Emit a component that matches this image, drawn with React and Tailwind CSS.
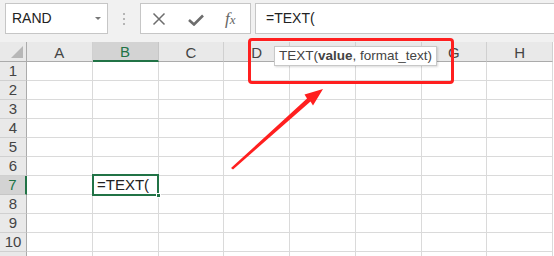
import React from "react";

const cols = ["A", "B", "C", "D", "E", "F", "G", "H"];
const rows = [1, 2, 3, 4, 5, 6, 7, 8, 9, 10, 11];

export default function App() {
  return (
    <div className="relative w-[554px] h-[256px] overflow-hidden bg-white" style={{ fontFamily: '"Liberation Sans", Arial, sans-serif' }}>
      {/* toolbar */}
      <div className="flex items-start h-[42px] bg-[#f1f1f1] pt-[3px]">
        <div className="ml-[5px] w-[103px] h-[31px] bg-white border border-[#c6c6c6] flex items-center pl-[6px] pr-[6px] text-[14px] text-[#222]">
          <span className="flex-1">RAND</span>
          <span className="w-0 h-0 border-l-[3px] border-r-[3px] border-t-[3px] border-l-transparent border-r-transparent border-t-[#777]" />
        </div>
        <div className="w-[32px] h-[31px] flex flex-col items-center justify-center gap-[3px]">
          <span className="w-[2px] h-[2px] bg-[#b5b5b5]" />
          <span className="w-[2px] h-[2px] bg-[#b5b5b5]" />
          <span className="w-[2px] h-[2px] bg-[#b5b5b5]" />
        </div>
        <div className="w-[111px] h-[31px] bg-white border border-[#c6c6c6] flex items-center">
          <svg className="ml-[11px]" width="14" height="14" viewBox="0 0 14 14">
            <path d="M1.5 1.5 L12.5 12.5 M12.5 1.5 L1.5 12.5" stroke="#6d6d6d" strokeWidth="1.5" fill="none" />
          </svg>
          <svg className="ml-[22px] mt-[2px]" width="16" height="12" viewBox="0 0 16 12">
            <path d="M1 6 L6 10.5 L15 1.5" stroke="#6d6d6d" strokeWidth="2.6" fill="none" />
          </svg>
          <span className="ml-[21px] text-[17px] italic text-[#666] leading-none" style={{ fontFamily: '"Liberation Serif", "Times New Roman", serif' }}>
            f<span className="text-[13px]">x</span>
          </span>
        </div>
        <div className="ml-[4px] flex-1 h-[31px] bg-white border border-[#c6c6c6] border-r-0 flex items-center pl-[10px] text-[14px] text-[#222]">
          =TEXT(
        </div>
      </div>

      {/* grid */}
      <div className="grid grid-cols-[27px_repeat(8,65.75px)] grid-rows-[20px_repeat(11,19px)]">
        {/* header row */}
        <div className="relative bg-[#e9e9e9] border-b border-r border-[#ababab]">
          <div className="absolute right-[3px] bottom-[3px] w-0 h-0" style={{ borderBottom: "12px solid #b7b7b7", borderLeft: "12px solid transparent" }} />
        </div>
        {cols.map((c) => (
          <div
            key={c}
            className={
              c === "B"
                ? "bg-[#d3d3d3] border-b-2 border-b-[#217346] border-r border-r-[#c6c6c6] flex items-center justify-center pt-[3px] text-[15px] text-[#217346]"
                : "bg-[#e9e9e9] border-b border-b-[#ababab] border-r border-r-[#d0d0d0] flex items-center justify-center pt-[3px] text-[15px] text-[#444]"
            }
          >
            {c}
          </div>
        ))}
        {rows.map((r) => (
          <React.Fragment key={r}>
            <div
              className={
                r === 7
                  ? "bg-[#d3d3d3] border-r-2 border-r-[#217346] border-b border-b-[#c6c6c6] flex items-center justify-center text-[15px] text-[#217346]"
                  : "bg-[#e9e9e9] border-r border-r-[#ababab] border-b border-b-[#d0d0d0] flex items-center justify-center text-[15px] text-[#444]"
              }
            >
              {r < 11 ? r : null}
            </div>
            {cols.map((c) => (
              <div key={c} className="border-r border-b border-[#dadada]" />
            ))}
          </React.Fragment>
        ))}
      </div>

      {/* selected cell B7 */}
      <div className="absolute left-[92px] top-[174px] w-[67px] h-[22px] border-2 border-[#217346] flex items-center pl-[3px] text-[15px] text-[#222]">
        =TEXT(
        <span className="absolute right-[-4px] bottom-[-4px] w-[5px] h-[5px] bg-[#217346] border border-white" />
      </div>

      {/* red rectangle */}
      <div className="absolute left-[248px] top-[38px] w-[206px] h-[46px] border-[3px] border-[#ff1f1f] rounded-[4px]" />

      {/* tooltip */}
      <div className="absolute left-[274px] top-[46px] h-[20px] px-[4px] bg-white border border-[#c8c8c8] shadow-[1px_1px_2px_rgba(0,0,0,0.15)] flex items-center text-[13.5px] text-[#444] whitespace-nowrap">
        TEXT(<span className="font-bold">value</span>, format_text)
      </div>

      {/* arrow */}
      <svg className="absolute left-0 top-0" width="554" height="256" viewBox="0 0 554 256">
        <polygon points="231,168 307,98.5 304.5,94.5 323,89 313,105.5 310.5,101.5 233,169.5" fill="#ff1f1f" />
      </svg>
    </div>
  );
}
